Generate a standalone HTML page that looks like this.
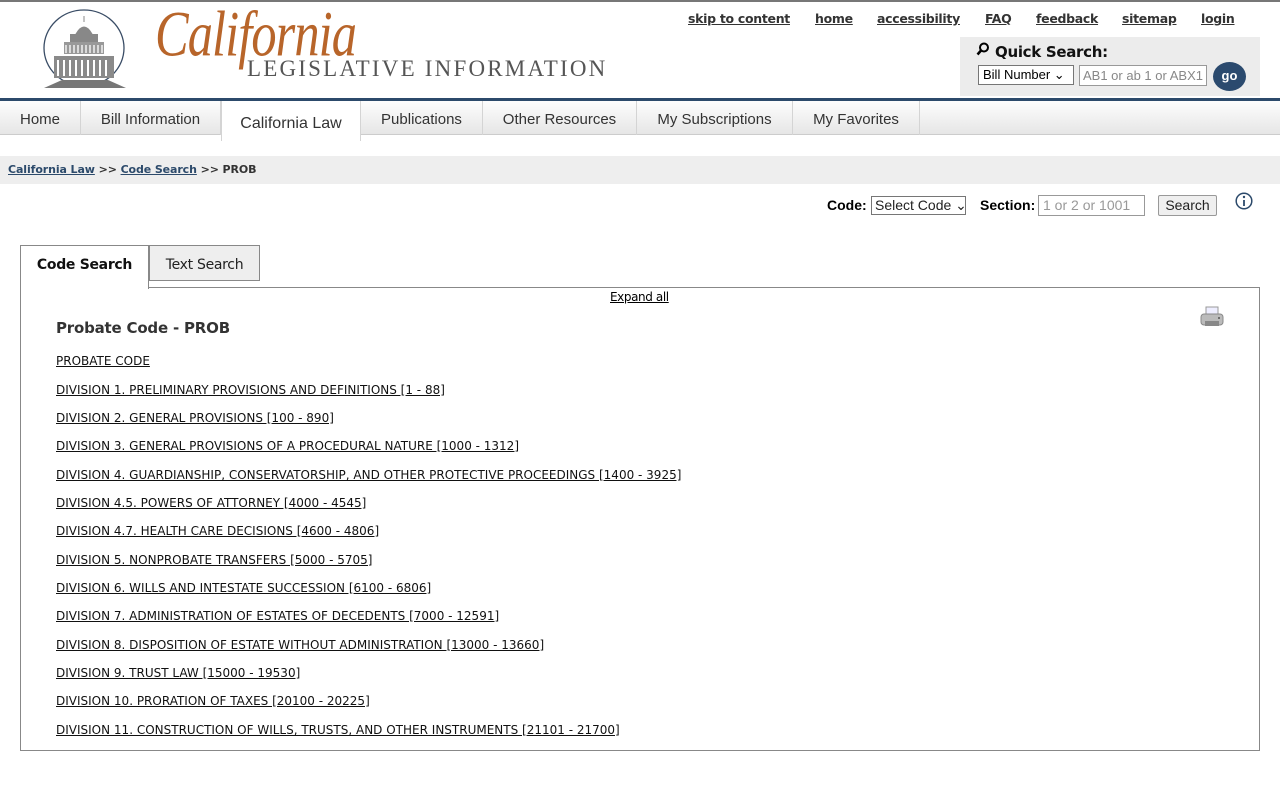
<!DOCTYPE html>
<html><head><meta charset="utf-8">
<style>
*{margin:0;padding:0;box-sizing:border-box}
body{width:1280px;height:800px;background:#fff;font-family:"DejaVu Sans",Verdana,sans-serif;position:relative;overflow:hidden;color:#222}
.abs{position:absolute}
.toplinks a{position:absolute;top:11px;font:bold 12.5px "DejaVu Sans",sans-serif;color:#333;text-decoration:underline;letter-spacing:-0.3px}
.nav{top:101px;left:0;width:1280px;height:34px;background:linear-gradient(#fdfdfd,#e6e6e6);border-bottom:1px solid #ccc}
.nav div{position:absolute;top:0;height:34px;text-align:center;font:15px "Liberation Sans",Arial,sans-serif;line-height:38px;color:#333;border-right:1px solid #d4d4d4}
.list a{position:absolute;left:56px;font:12px "DejaVu Sans",sans-serif;color:#111;text-decoration:underline;letter-spacing:0px;white-space:nowrap}
</style></head><body>
<div class="abs" style="top:0;left:0;width:1280px;height:2px;background:#777"></div>
<svg class="abs" style="left:40px;top:8px" width="90" height="84" viewBox="0 0 90 84">
<ellipse cx="44" cy="40" rx="40" ry="38" fill="none" stroke="#3a4d66" stroke-width="1.3"/>
<rect x="2" y="72" width="80" height="10" fill="#fff"/>
<path d="M44 8v6M36 26q8-14 16 0z" fill="#888" stroke="#888"/>
<rect x="30" y="26" width="28" height="8" fill="#888"/>
<rect x="24" y="34" width="40" height="12" fill="#999"/>
<path d="M26 37v8M30 37v8M34 37v8M38 37v8M42 37v8M46 37v8M50 37v8M54 37v8M58 37v8M62 37v8" stroke="#fff" stroke-width="1.3"/>
<rect x="14" y="48" width="60" height="22" fill="#8a8a8a"/>
<path d="M18 52v16M24 52v16M30 52v16M36 52v16M42 52v16M48 52v16M54 52v16M60 52v16M66 52v16" stroke="#fff" stroke-width="2"/>
<path d="M4 80l18-8h46l18 8z" fill="#777"/>
</svg>
<div class="abs" style="left:155px;top:-2px;font:italic 56px 'Liberation Serif',serif;color:#b8652a;letter-spacing:-1px;transform:scale(0.9,1.15);transform-origin:top left">California</div>
<div class="abs" style="left:247px;top:56px;font:23px 'Liberation Serif',serif;color:#555;letter-spacing:2.2px">LEGISLATIVE INFORMATION</div>
<div class="toplinks">
<a style="left:688px">skip to content</a><a style="left:815px">home</a><a style="left:877px">accessibility</a><a style="left:985px">FAQ</a><a style="left:1036px">feedback</a><a style="left:1122px">sitemap</a><a style="left:1201px">login</a>
</div>
<div class="abs" style="left:960px;top:37px;width:300px;height:59px;background:#ececec"></div>
<svg class="abs" style="left:976px;top:42px" width="14" height="14" viewBox="0 0 14 14"><circle cx="8" cy="5.5" r="4" fill="none" stroke="#000" stroke-width="2"/><path d="M5 8.5L1.5 12.5" stroke="#000" stroke-width="2.5"/></svg>
<div class="abs" style="left:995px;top:43px;font:bold 15px 'DejaVu Sans',sans-serif;color:#111;letter-spacing:-0.3px">Quick Search:</div>
<div class="abs" style="left:978px;top:65px;width:96px;height:20px;border:1px solid #767676;background:#fff;font:13px 'Liberation Sans',sans-serif;padding:1px 4px;color:#000;white-space:nowrap">Bill Number ⌄</div>
<div class="abs" style="left:1079px;top:65px;width:128px;height:21px;border:1px solid #999;background:#fff;font:13px 'Liberation Sans',sans-serif;padding:2px 3px;color:#888;overflow:hidden;white-space:nowrap">AB1 or ab 1 or ABX1</div>
<div class="abs" style="left:1213px;top:62px;width:33px;height:29px;border-radius:50%;background:#2b4a6e;color:#fff;font:bold 13px 'Liberation Sans',sans-serif;text-align:center;line-height:28px">go</div>
<div class="abs" style="top:98px;left:0;width:1280px;height:3px;background:#2c4a6b"></div>
<div class="abs nav">
<div style="left:0;width:81px">Home</div>
<div style="left:81px;width:140px">Bill Information</div>
<div style="left:221px;width:140px;background:#fff;height:40px;border-left:1px solid #d4d4d4;font-size:16px;line-height:46px">California Law</div>
<div style="left:361px;width:122px">Publications</div>
<div style="left:483px;width:154px">Other Resources</div>
<div style="left:637px;width:156px">My Subscriptions</div>
<div style="left:793px;width:127px">My Favorites</div>
</div>
<div class="abs" style="top:156px;left:0;width:1280px;height:28px;background:#eee;font:bold 11px 'DejaVu Sans',sans-serif;color:#333;padding:7px 8px;letter-spacing:-0.1px"><u style="color:#2c4a6b">California Law</u> &gt;&gt; <u style="color:#2c4a6b">Code Search</u> &gt;&gt; PROB</div>
<div class="abs" style="left:827px;top:197px;font:bold 14px 'Liberation Sans',sans-serif;color:#000">Code:</div>
<div class="abs" style="left:871px;top:196px;width:95px;height:19px;border:1px solid #767676;font:14px 'Liberation Sans',sans-serif;line-height:17px;padding:0 3px;white-space:nowrap;overflow:hidden">Select Code ⌄</div>
<div class="abs" style="left:980px;top:197px;font:bold 14px 'Liberation Sans',sans-serif;color:#000">Section:</div>
<div class="abs" style="left:1038px;top:195px;width:107px;height:21px;border:1px solid #999;font:14px 'Liberation Sans',sans-serif;padding:1px 4px;color:#999">1 or 2 or 1001</div>
<div class="abs" style="left:1158px;top:195px;width:59px;height:21px;border:1px solid #999;border-radius:2px;background:#efefef;font:14px 'Liberation Sans',sans-serif;line-height:19px;text-align:center">Search</div>
<svg class="abs" style="left:1235px;top:192px" width="18" height="18" viewBox="0 0 18 18"><circle cx="9" cy="9" r="7.8" fill="none" stroke="#2c4a6b" stroke-width="1.5"/><circle cx="9" cy="5" r="1.2" fill="#2c4a6b"/><path d="M9 8v6" stroke="#2c4a6b" stroke-width="1.8"/></svg>
<div class="abs" style="left:20px;top:245px;width:129px;height:44px;border:1px solid #888;border-bottom:none;background:#fff;z-index:2;font:bold 14px 'DejaVu Sans',sans-serif;line-height:38px;text-align:center;color:#111;letter-spacing:-0.3px">Code Search</div>
<div class="abs" style="left:149px;top:245px;width:111px;height:36px;border:1px solid #888;background:#eee;font:14px 'DejaVu Sans',sans-serif;line-height:38px;text-align:center;color:#222;letter-spacing:-0.3px">Text Search</div>
<div class="abs" style="left:20px;top:287px;width:1240px;height:464px;border:1px solid #888"></div>
<div class="abs" style="left:610px;top:290px;font:12px 'DejaVu Sans',sans-serif;letter-spacing:-0.4px;text-decoration:underline;color:#000">Expand all</div>
<div class="abs" style="left:56px;top:319px;font:bold 15px 'DejaVu Sans',sans-serif;color:#333;letter-spacing:-0.2px">Probate Code - PROB</div>
<svg class="abs" style="left:1200px;top:306px" width="24" height="24" viewBox="0 0 24 24"><rect x="6" y="1" width="12" height="8" fill="#eef" stroke="#999"/><rect x="1" y="8" width="22" height="11" rx="3" fill="#bbb" stroke="#888"/><rect x="5" y="15" width="14" height="5" fill="#888"/><circle cx="19" cy="12" r="1" fill="#555"/></svg>
<div class="list">
<a style="top:354px">PROBATE CODE</a>
<a style="top:383px">DIVISION 1. PRELIMINARY PROVISIONS AND DEFINITIONS [1 - 88]</a>
<a style="top:411px">DIVISION 2. GENERAL PROVISIONS [100 - 890]</a>
<a style="top:439px">DIVISION 3. GENERAL PROVISIONS OF A PROCEDURAL NATURE [1000 - 1312]</a>
<a style="top:468px">DIVISION 4. GUARDIANSHIP, CONSERVATORSHIP, AND OTHER PROTECTIVE PROCEEDINGS [1400 - 3925]</a>
<a style="top:496px">DIVISION 4.5. POWERS OF ATTORNEY [4000 - 4545]</a>
<a style="top:524px">DIVISION 4.7. HEALTH CARE DECISIONS [4600 - 4806]</a>
<a style="top:553px">DIVISION 5. NONPROBATE TRANSFERS [5000 - 5705]</a>
<a style="top:581px">DIVISION 6. WILLS AND INTESTATE SUCCESSION [6100 - 6806]</a>
<a style="top:609px">DIVISION 7. ADMINISTRATION OF ESTATES OF DECEDENTS [7000 - 12591]</a>
<a style="top:638px">DIVISION 8. DISPOSITION OF ESTATE WITHOUT ADMINISTRATION [13000 - 13660]</a>
<a style="top:666px">DIVISION 9. TRUST LAW [15000 - 19530]</a>
<a style="top:694px">DIVISION 10. PRORATION OF TAXES [20100 - 20225]</a>
<a style="top:723px">DIVISION 11. CONSTRUCTION OF WILLS, TRUSTS, AND OTHER INSTRUMENTS [21101 - 21700]</a>
</div>
</body></html>
